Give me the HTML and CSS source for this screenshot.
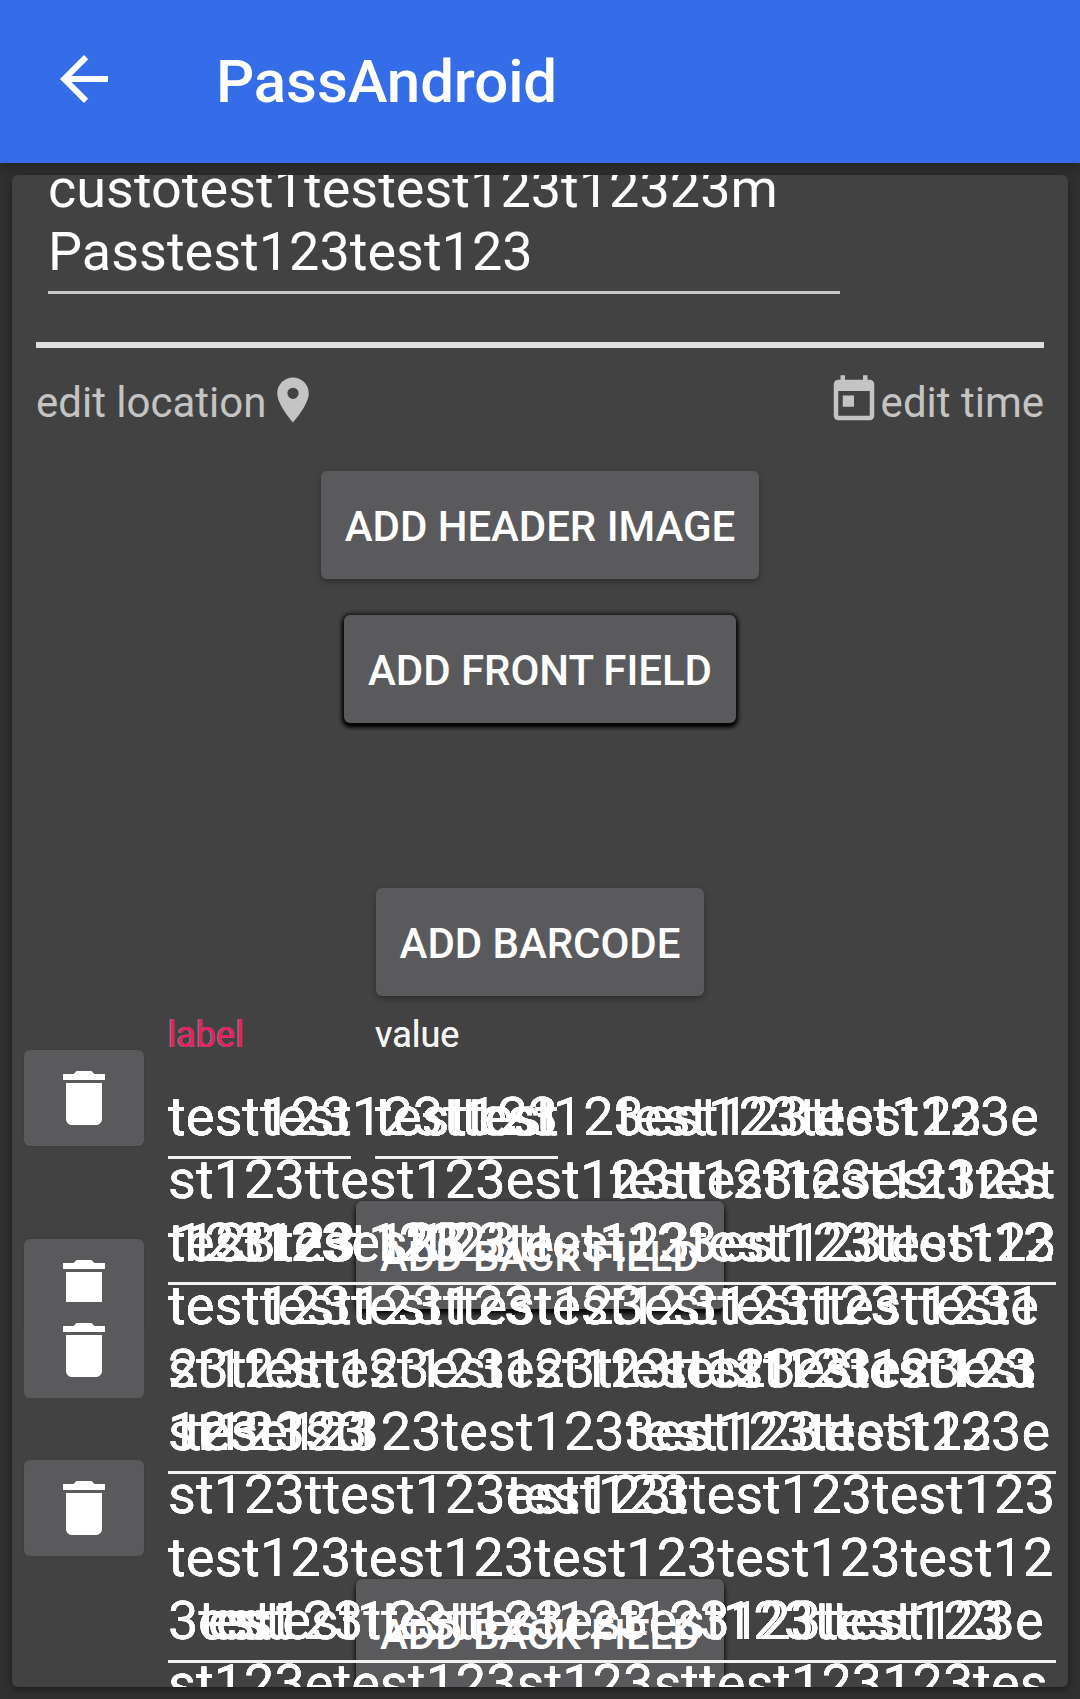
FILE: index.html
```html
<!DOCTYPE html>
<html lang="en">
<head>
<meta charset="utf-8">
<title>PassAndroid</title>
<link rel="stylesheet" href="styles.css">
</head>
<body>
<svg class="defs" width="0" height="0">
  <symbol id="trash" viewBox="0 0 24 24"><path d="M6 19c0 1.100.9 2 2 2h8c1.100 0 2-.9 2-2V7H6zM19 4h-3.500l-1-1h-5l-1 1H5v2h14z"/></symbol>
</svg>
<header class="toolbar">
  <svg class="back" viewBox="0 0 24 24"><path d="M20 11H7.830l5.590-5.590L12 4l-8 8 8 8 1.410-1.410L7.830 13H20z"/></svg>
  <h1>PassAndroid</h1>
</header>
<main class="card">
  <div class="name">custotest1testest123t12323m<br>Passtest123test123</div>
  <div class="divider"></div>
  <div class="links">
    <span class="link">edit location<svg viewBox="0 0 24 24"><path fill-rule="evenodd" d="M12 2C8.130 2 5 5.130 5 9c0 5.250 7 13 7 13s7-7.750 7-13c0-3.870-3.130-7-7-7zm0 9.500a2.500 2.500 0 1 1 0-5 2.500 2.500 0 0 1 0 5z"/></svg></span>
    <span class="link"><svg viewBox="0 0 24 24"><path fill-rule="evenodd" d="M19 3h-1V1h-2v2H8V1H6v2H5a2 2 0 0 0-2 2v14c0 1.100.9 2 2 2h14a2 2 0 0 0 2-2V5a2 2 0 0 0-2-2zm0 16H5V8h14zM7 10h5v5H7z"/></svg>edit time</span>
  </div>
  <button class="btn header-image">ADD HEADER IMAGE</button>
  <button class="btn front raised">ADD FRONT FIELD</button>
  <button class="btn barcode">ADD BARCODE</button>
  <section class="stack">
    <button class="del d1"><svg><use href="#trash"/></svg></button>
    <button class="del d2"><svg><use href="#trash"/></svg></button>
    <button class="del d3"><svg><use href="#trash"/></svg></button>
    <button class="del d4"><svg><use href="#trash"/></svg></button>
    <button class="btn raised add b1">ADD BACK FIELD</button>
    <button class="btn raised add b2">ADD BACK FIELD</button>
    <span class="hint label">label</span>
    <span class="hint value">value</span>
    <div class="text main">testtest123ttest123est123ttest123e
st123ttest123est123ttest123est123t
test123est123ttest123est123ttest12
testtest123ttest123est123ttest123e
st123ttest123est123ttest123est123
st123st123test1233est123ttest123e
st123ttest123est123ttest123test123
test123test123test123test123test12
3test
st123etest123st123sttest123123tes</div>
    <div class="text r1 left">test123</div>
    <div class="text r1 mid">testtest</div>
    <div class="text r1 mid">test123</div>
    <div class="text r1 far">test123test123</div>
    <div class="text r2 half">test123test123tes</div>
    <div class="text r3 inset">123test123</div>
    <div class="text r3 near">123123</div>
    <div class="text r3 wide">123test123test123test123</div>
    <div class="text r3 mid">123</div>
    <div class="text r4 left">test123test123test123test123ttest1
23ttest123est123ttest123est123est
123e123</div>
    <div class="text r5 late">test123test123</div>
    <div class="text r6 shift">test123</div>
    <div class="text r6 far6">test123test123</div>
    <div class="text r7 center">test123</div>
    <div class="text r9 tail">est123ttest123est123123test123</div>
    <div class="text r9 tail2">estest123ttest123est123ttest123e</div>
    <i class="line l1"></i>
    <i class="line l2"></i>
    <i class="line full l3"></i>
    <i class="line full l4"></i>
    <i class="line full l5"></i>
  </section>
</main>
</body>
</html>
```
FILE: styles.css
```css
* { box-sizing: border-box; }
body {
  margin: 0;
  height: 1699px;
  display: flex;
  flex-direction: column;
  overflow: hidden;
  background: #303030;
  color: #fff;
  font-family: Roboto, sans-serif;
}
svg { fill: currentColor; flex: none; }
.defs { position: absolute; }

.toolbar {
  height: 163px;
  flex: none;
  display: flex;
  align-items: center;
  padding-left: 48px;
  background: #356ce8;
  box-shadow: 0 2px 12px rgba(0, 0, 0, .4);
}
.back { width: 72px; height: 72px; margin-top: -5px; }
h1 { margin: 0 0 0 96px; font-size: 60px; font-weight: 500; letter-spacing: -.1px; }

.card {
  flex: 1;
  min-height: 0;
  margin: 12px 12px 12px;
  padding: 0 24px;
  display: flex;
  flex-direction: column;
  align-items: center;
  overflow: hidden;
  background: #424242;
  border-radius: 6px;
  box-shadow: 0 3px 8px rgba(0, 0, 0, .4);
}
.name {
  align-self: flex-start;
  flex: none;
  width: 792px;
  height: 137px;
  margin: -18px 0 48px 12px;
  border-bottom: 3px solid #c7c7c7;
  font-size: 54px;
  line-height: 63px;
  white-space: nowrap;
}
.divider { width: 100%; height: 6px; flex: none; background: #dedede; }
.links {
  width: 100%;
  height: 54px;
  flex: none;
  margin: 25px 0 44px;
  display: flex;
  justify-content: space-between;
  color: #c4c4c4;
  font-size: 42px;
  line-height: 60px;
}
.link { display: flex; }
.link svg { width: 54px; height: 54px; }

.btn {
  flex: none;
  height: 108px;
  padding: 2px 24px 0;
  border: 0;
  border-radius: 6px;
  background: #5a5a5c;
  color: #fff;
  font: 500 42px/49px Roboto, sans-serif;
  letter-spacing: -.06px;
  white-space: nowrap;
  box-shadow: 0 3px 6px rgba(0, 0, 0, .3);
}
.raised { box-shadow: 0 1px 4px 2px rgba(0, 0, 0, .85), 0 4px 4px rgba(0, 0, 0, .95); }
.front { margin-top: 36px; }
.barcode { margin-top: 165px; }

/* Overlapping pass fields: every child floats over the others. */
.stack { position: relative; flex: none; width: 1056px; height: 691px; }
.stack > * { position: absolute; }
.del {
  left: 12px;
  width: 120px;
  height: 96px;
  padding: 12px 24px;
  border: 0;
  border-radius: 6px;
  background: #5a5a5c;
  color: #fff;
  box-shadow: 0 0 2px rgba(0, 0, 0, .15);
}
.del svg { display: block; width: 72px; height: 72px; }
.d1 { top: 54px; }
.d2 { top: 243px; }
.d3 { top: 306px; box-shadow: none; }
.d4 { top: 464px; }
.add { left: 344px; box-shadow: 0 1px 4px rgba(0, 0, 0, .5), 0 5px 5px rgba(0, 0, 0, .85); }
.b1 { top: 205px; }
.b2 { top: 583px; }
.hint { top: 18px; font-size: 36px; line-height: 42px; }
.label { left: 156px; color: #e91e63; text-shadow: -1px 0 0 rgba(255, 255, 255, .45); }
.value { left: 363px; color: #f4f4f4; text-shadow: 0 0 0 #f4f4f4; }
.text {
  font-size: 54px;
  line-height: 63px;
  letter-spacing: .04px;
  white-space: pre;
  text-shadow: 0 0 0 #fff, 0 0 0 #fff;
}
.main { left: 156px; top: 89px; }
.left { left: 156px; }
.mid { left: 363px; }
.far { left: 604px; }
.half { left: 598px; }
.inset { left: 173px; }
.near { left: 162px; }
.wide { left: 404px; }
.late { left: 656px; }
.shift { left: 172px; }
.far6 { left: 614px; }
.center { left: 494px; }
.tail { left: 186px; }
.tail2 { left: 196px; }
.r1 { top: 89px; }
.r2 { top: 152px; }
.r3 { top: 215px; }
.r4 { top: 278px; }
.r5 { top: 341px; }
.r6 { top: 404px; }
.r7 { top: 467px; }
.r9 { top: 593px; }
.line { height: 3px; width: 183px; background: #f2f2f2; }
.l1 { left: 156px; top: 160px; }
.l2 { left: 363px; top: 160px; }
.full { left: 156px; width: 888px; }
.l3 { top: 286px; }
.l4 { top: 475px; }
.l5 { top: 664px; }
```
